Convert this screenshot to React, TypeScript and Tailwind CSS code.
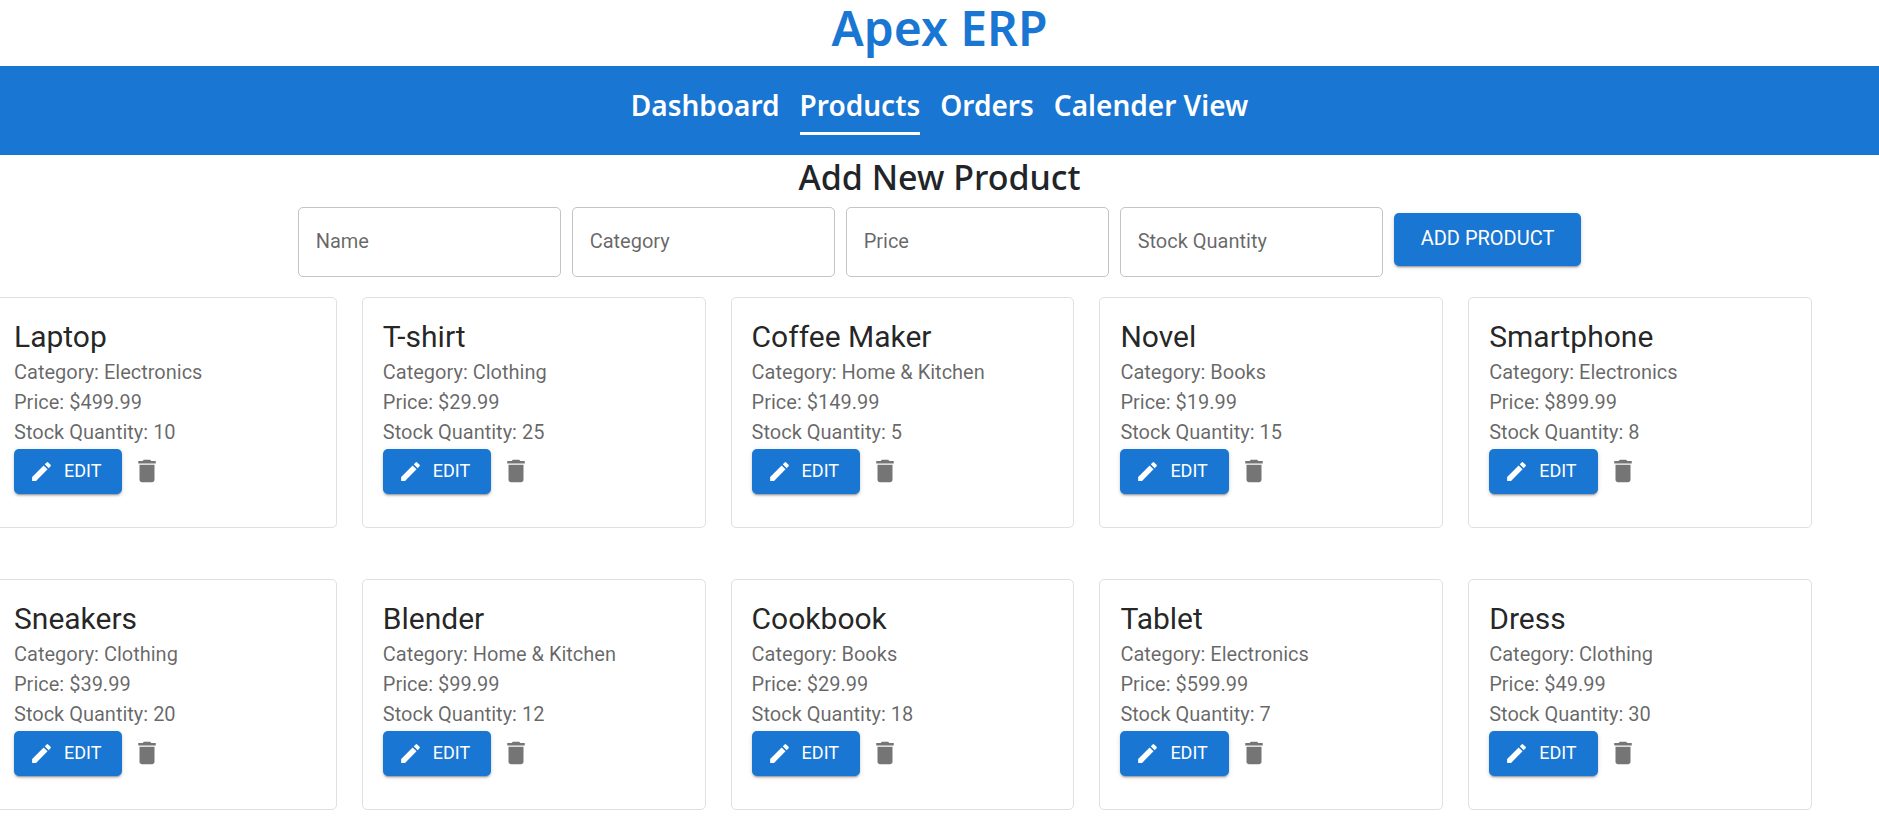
const navItems = ["Dashboard", "Products", "Orders", "Calender View"];

const fields = ["Name", "Category", "Price", "Stock Quantity"];

const products = [
  { name: "Laptop", category: "Electronics", price: "499.99", stock: 10 },
  { name: "T-shirt", category: "Clothing", price: "29.99", stock: 25 },
  { name: "Coffee Maker", category: "Home & Kitchen", price: "149.99", stock: 5 },
  { name: "Novel", category: "Books", price: "19.99", stock: 15 },
  { name: "Smartphone", category: "Electronics", price: "899.99", stock: 8 },
  { name: "Sneakers", category: "Clothing", price: "39.99", stock: 20 },
  { name: "Blender", category: "Home & Kitchen", price: "99.99", stock: 12 },
  { name: "Cookbook", category: "Books", price: "29.99", stock: 18 },
  { name: "Tablet", category: "Electronics", price: "599.99", stock: 7 },
  { name: "Dress", category: "Clothing", price: "49.99", stock: 30 },
];

type Product = (typeof products)[number];

const raised =
  "rounded-[5px] bg-[#1976d2] uppercase text-white shadow-[0px_3px_1px_-2px_rgba(0,0,0,0.2),0px_2px_2px_0px_rgba(0,0,0,0.14),0px_1px_5px_0px_rgba(0,0,0,0.12)]";

function EditIcon() {
  return (
    <svg className="size-[25px]" viewBox="0 0 24 24" fill="currentColor" aria-hidden="true">
      <path d="M3 17.25V21h3.75L17.81 9.94l-3.75-3.75zM20.71 7.04c.39-.39.39-1.02 0-1.41l-2.34-2.34a.9959.9959 0 0 0-1.41 0l-1.83 1.83 3.75 3.75z" />
    </svg>
  );
}

function DeleteIcon() {
  return (
    <svg className="size-[30px]" viewBox="0 0 24 24" fill="currentColor" aria-hidden="true">
      <path d="M6 19c0 1.1.9 2 2 2h8c1.1 0 2-.9 2-2V7H6zM19 4h-3.5l-1-1h-5l-1 1H5v2h14z" />
    </svg>
  );
}

function ProductCard({ product }: { product: Product }) {
  return (
    <article className="rounded-[5px] border border-[#e0e0e0] bg-white px-5 pt-[19px] pb-8">
      <h3 className="text-[30px] leading-10 text-black/87">{product.name}</h3>
      <p className="text-xl leading-[30px] text-black/60">Category: {product.category}</p>
      <p className="text-xl leading-[30px] text-black/60">Price: ${product.price}</p>
      <p className="text-xl leading-[30px] text-black/60">Stock Quantity: {product.stock}</p>
      <div className="flex h-12 items-center">
        <button type="button" className={`${raised} flex h-[45px] items-center gap-2.5 pr-[21px] pl-[15px] text-lg`}>
          <EditIcon />
          Edit
        </button>
        <button type="button" aria-label="Delete" className="p-2.5 text-black/54">
          <DeleteIcon />
        </button>
      </div>
    </article>
  );
}

export default function App() {
  return (
    <div className="min-h-screen bg-white pb-5 font-['Roboto',sans-serif]">
      <header className="text-center font-['Noto_Sans',sans-serif]">
        <h1 className="h-[66px] text-5xl leading-[56px] font-semibold text-[#1976d2]">Apex ERP</h1>
        <nav className="flex h-[89px] items-start justify-center gap-5 bg-[#1976d2] pt-[15px] text-[28px] font-semibold text-white">
          {navItems.map((item) => (
            <a
              key={item}
              href="#"
              aria-current={item === "Products" ? "page" : undefined}
              className="border-b-[3px] border-transparent pb-[3px] leading-[48px] aria-[current=page]:border-white"
            >
              {item}
            </a>
          ))}
        </nav>
      </header>
      <main>
        <h2 className="h-[52px] text-center font-['Noto_Sans',sans-serif] text-[34px] leading-[44px] font-medium text-[#212529]">
          Add New Product
        </h2>
        <form className="mb-5 flex items-start justify-center gap-[11px]">
          {fields.map((field) => (
            <input
              key={field}
              type="text"
              aria-label={field}
              placeholder={field}
              className="h-[70px] w-[263px] rounded-[5px] border border-black/23 px-[17px] pb-0.5 text-xl text-black/87 placeholder:text-black/60"
            />
          ))}
          <button type="button" className={`${raised} mt-1.5 h-[53px] px-[27px] pb-1 text-xl`}>
            Add Product
          </button>
        </form>
        <section className="mr-[67px] -ml-[7px] grid grid-cols-5 gap-x-[25px] gap-y-[51px]">
          {products.map((product) => (
            <ProductCard key={product.name} product={product} />
          ))}
        </section>
      </main>
    </div>
  );
}
